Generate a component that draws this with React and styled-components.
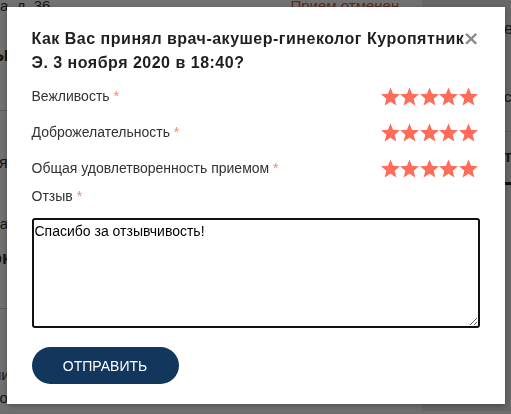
import styled, { createGlobalStyle } from "styled-components";

const GlobalStyle = createGlobalStyle`
  html, body {
    margin: 0;
    padding: 0;
  }
  body {
    font-family: "Liberation Sans", Arial, sans-serif;
    background: #f3f4f6;
    overflow: hidden;
  }
`;

const questions = [
  "Вежливость",
  "Доброжелательность",
  "Общая удовлетворенность приемом",
];

// background page (mostly hidden by the modal)
const Page = styled.div`
  height: 414px;
  display: grid;
  grid-template-columns: 422px 1fr;
  margin-top: -3px;
`;

const PageMain = styled.div`
  display: flex;
  flex-direction: column;
  background: #fafafa;
`;

const PageSide = styled.div`
  display: flex;
  flex-direction: column;
  background: #e4e4e4;
  padding-left: 82px;
`;

const BgLine = styled.div`
  display: flex;
  align-items: center;
  flex: none;
  height: ${(p) => p.h}px;
  font-size: ${(p) => p.size || 15}px;
  font-weight: ${(p) => (p.bold ? 700 : 400)};
  color: #333;
  margin-left: ${(p) => p.indent || 0}px;
  border-bottom: ${(p) => (p.rule ? "1px solid #ccc" : "none")};
  white-space: nowrap;
  overflow: hidden;
`;

const Cancelled = styled.span`
  color: #d9533f;
  margin-left: ${(p) => p.offset || 240}px;
`;

const Overlay = styled.div`
  position: fixed;
  inset: 0;
  background: rgba(0, 0, 0, 0.55);
  display: flex;
  justify-content: center;
  align-items: flex-start;
  padding-top: 7px;
`;

const Modal = styled.div`
  position: relative;
  width: 498px;
  box-sizing: border-box;
  background: #fff;
  padding: 20px 25px 20px 25px;
  box-shadow: 0 2px 6px rgba(0, 0, 0, 0.3);
`;

const Close = styled.button`
  position: absolute;
  top: 19px;
  right: 25px;
  border: none;
  background: none;
  padding: 0;
  font-family: "DejaVu Sans", sans-serif;
  font-size: 20px;
  font-weight: 700;
  line-height: 24px;
  color: #8a8a8a;
  cursor: pointer;
`;

const Title = styled.h3`
  margin: 0 0 3px;
  padding-right: 10px;
  font-size: 16px;
  line-height: 24px;
  font-weight: 700;
  letter-spacing: 0.5px;
  color: #1f1f1f;
`;

const RatingRow = styled.div`
  display: flex;
  align-items: center;
  justify-content: space-between;
  height: 36px;
  padding-right: 2px;
`;

const Label = styled.label`
  display: block;
  font-size: 14px;
  line-height: 20px;
  color: #333;
`;

const Required = styled.span`
  color: #ff8070;
`;

const Stars = styled.div`
  display: flex;
  gap: 0.5px;
`;

const StarIcon = styled.svg`
  width: 19px;
  height: 19px;
  fill: ${(p) => (p.$on ? "#ff6c5a" : "#ddd")};
  display: block;
`;

const ReviewBox = styled.textarea`
  display: block;
  box-sizing: border-box;
  width: 448px;
  height: 110px;
  margin: 12px 0 19px;
  border: 2px solid #111;
  border-radius: 3px;
  padding: 2px 1px;
  font-family: "Liberation Sans", Arial, sans-serif;
  font-size: 14px;
  line-height: 18px;
  color: #000;
  resize: vertical;
  outline: none;
`;

const SubmitButton = styled.button`
  display: block;
  width: 147px;
  height: 37px;
  border: none;
  border-radius: 19px;
  background: #12365c;
  color: #fff;
  font-family: "Liberation Sans", Arial, sans-serif;
  font-size: 14px;
  text-transform: uppercase;
  cursor: pointer;
`;

function Star({ on }) {
  return (
    <StarIcon viewBox="0.5 0.5 23 23" $on={on}>
      <polygon points="12,1 15.1,8.6 23.4,9.3 17.1,14.7 19.1,22.8 12,18.5 4.9,22.8 6.9,14.7 0.6,9.3 8.9,8.6" />
    </StarIcon>
  );
}

export default function App() {
  return (
    <>
      <GlobalStyle />
      <Page>
        <PageMain>
          <BgLine h={16}>
            а, д. 36<Cancelled>Прием отменен</Cancelled>
          </BgLine>
          <BgLine h={82} size={20} bold indent={-8}>
            ыС
          </BgLine>
          <BgLine h={15} rule />
          <BgLine h={104} size={16} indent={-10}>
            ая
          </BgLine>
          <BgLine h={16} indent={-9}>
            ла
          </BgLine>
          <BgLine h={54} size={18} bold indent={-9}>
            ок
          </BgLine>
          <BgLine h={23} rule />
          <BgLine h={50} />
          <BgLine h={30} indent={-9}>
            ми
          </BgLine>
          <BgLine h={16} indent={-9}>
            иол
          </BgLine>
          <BgLine h={20}>
            <Cancelled offset={298}>Приём отменён</Cancelled>
          </BgLine>
        </PageMain>
        <PageSide>
          <BgLine h={64} size={16}>
            ед
          </BgLine>
          <BgLine h={70} rule>
            с
          </BgLine>
          <BgLine h={50} size={16} bold>
            т
          </BgLine>
          <BgLine h={3} style={{ background: "#222" }} />
        </PageSide>
      </Page>

      <Overlay>
        <Modal>
          <Close aria-label="Закрыть">×</Close>
          <Title>
            Как Вас принял врач-акушер-гинеколог Куропятник Э. 3 ноября 2020 в
            18:40?
          </Title>
          {questions.map((q) => (
            <RatingRow key={q}>
              <Label>
                {q} <Required>*</Required>
              </Label>
              <Stars>
                {[1, 2, 3, 4, 5].map((n) => (
                  <Star key={n} on />
                ))}
              </Stars>
            </RatingRow>
          ))}
          <Label>
            Отзыв <Required>*</Required>
          </Label>
          <ReviewBox defaultValue="Спасибо за отзывчивость!" />
          <SubmitButton>Отправить</SubmitButton>
        </Modal>
      </Overlay>
    </>
  );
}
